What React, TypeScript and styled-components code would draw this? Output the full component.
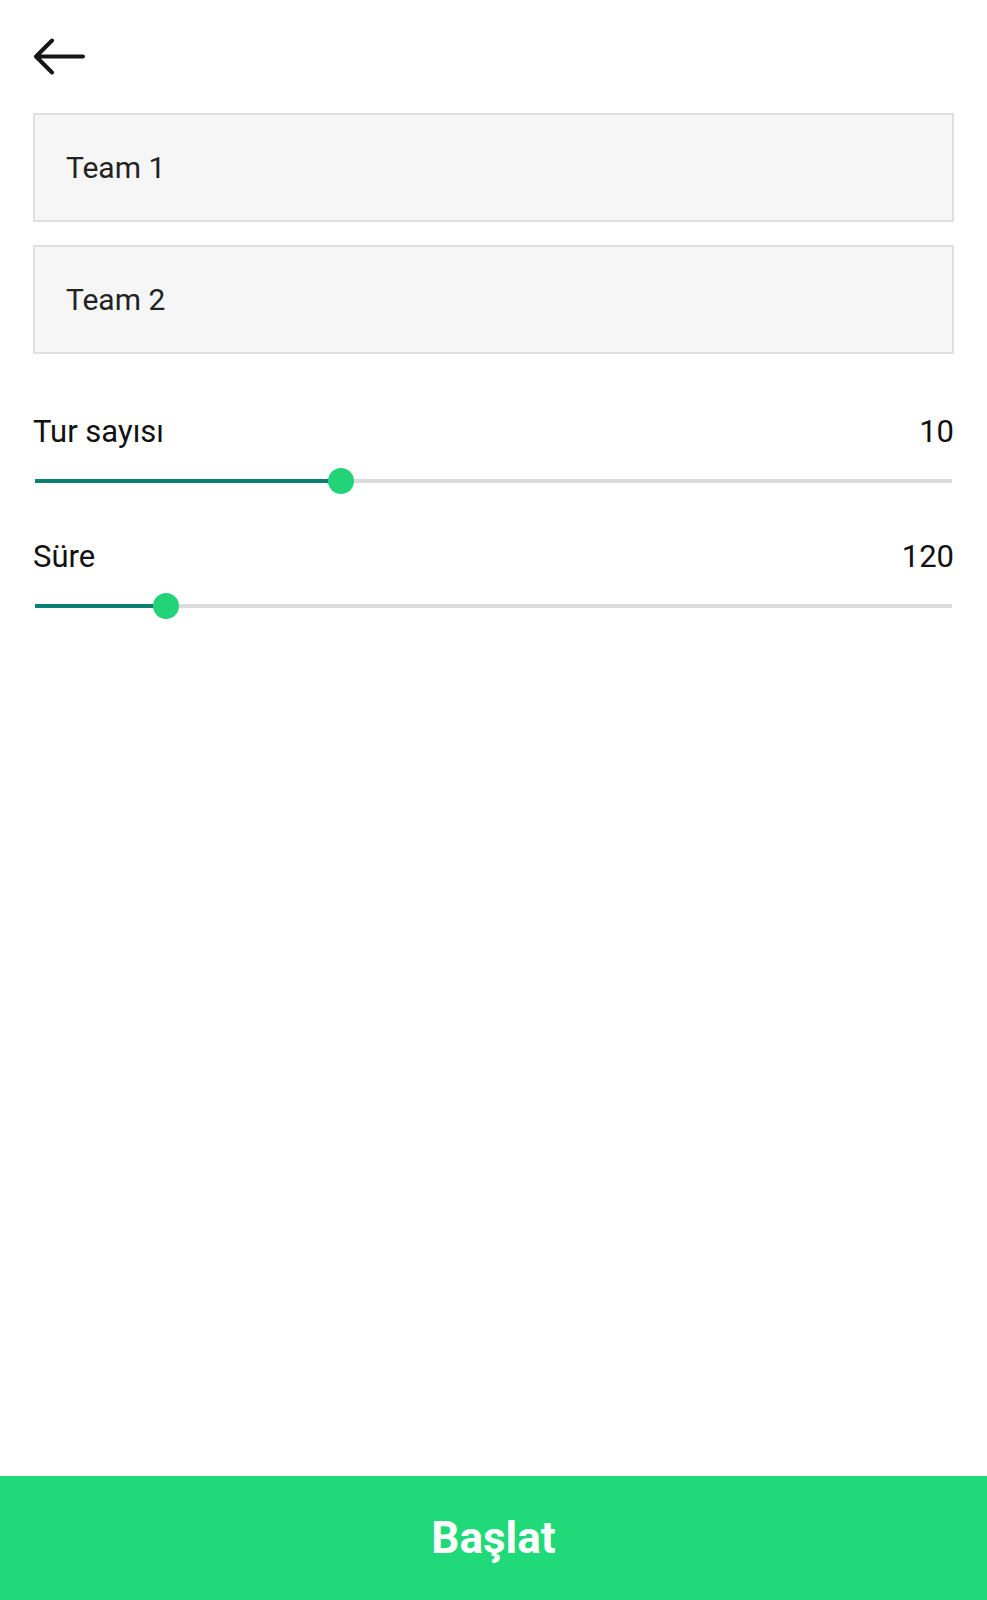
import styled, { createGlobalStyle } from 'styled-components';

const GlobalStyle = createGlobalStyle`
  html, body {
    margin: 0;
    padding: 0;
    background: #ffffff;
    font-family: Roboto, 'Noto Sans', sans-serif;
  }
  * {
    box-sizing: border-box;
  }
`;

type SliderRowProps = {
  label: string;
  value: number;
  min: number;
  max: number;
};

const SliderRow = ({ label, value, min, max }: SliderRowProps) => {
  const percent = ((value - min) / (max - min)) * 100;
  return (
    <SliderBlock>
      <LabelRow>
        <Label>{label}</Label>
        <Value>{value}</Value>
      </LabelRow>
      <SliderArea>
        <Track>
          <Fill style={{ width: `${percent}%` }} />
          <Thumb style={{ left: `${percent}%` }} />
        </Track>
      </SliderArea>
    </SliderBlock>
  );
};

const BackArrow = () => (
  <svg width="54" height="38" viewBox="0 0 54 38" fill="none">
    <path
      d="M51 18.5H4M20 2.5L4 18.5L20 34.5"
      stroke="#161616"
      strokeWidth="4"
      strokeLinecap="round"
      strokeLinejoin="round"
    />
  </svg>
);

export default function App() {
  return (
    <Screen>
      <GlobalStyle />
      <Content>
        <Header>
          <BackButton aria-label="Geri">
            <BackArrow />
          </BackButton>
        </Header>

        <Inputs>
          <TeamInput defaultValue="Team 1" />
          <TeamInput defaultValue="Team 2" />
        </Inputs>

        <Settings>
          <SliderRow label="Tur sayısı" value={10} min={5} max={20} />
          <SliderRow label="Süre" value={120} min={60} max={480} />
        </Settings>
      </Content>

      <StartButton>Başlat</StartButton>
    </Screen>
  );
}

const Screen = styled.div`
  display: flex;
  flex-direction: column;
  height: 100vh;
  background: #ffffff;
`;

const Content = styled.div`
  flex: 1;
  padding: 0 33px;
`;

const Header = styled.div`
  height: 113px;
  padding-top: 38px;
`;

const BackButton = styled.button`
  display: block;
  background: none;
  border: none;
  padding: 0;
  margin-left: -1px;
  cursor: pointer;
`;

const Inputs = styled.div`
  display: flex;
  flex-direction: column;
  gap: 23px;
`;

const TeamInput = styled.input`
  display: block;
  width: 100%;
  height: 109px;
  padding: 0 0 0 31px;
  background: #f6f6f6;
  border: 2px solid #e0e0e0;
  border-radius: 0;
  font-family: Roboto, 'Noto Sans', sans-serif;
  font-size: 30px;
  color: #222222;
  outline: none;
`;

const Settings = styled.div`
  display: flex;
  flex-direction: column;
  gap: 48px;
  margin-top: 63px;
`;

const SliderBlock = styled.div`
  display: flex;
  flex-direction: column;
  gap: 21px;
`;

const LabelRow = styled.div`
  display: flex;
  justify-content: space-between;
  align-items: baseline;
  font-size: 31px;
  line-height: 30px;
  color: #111111;
`;

const Label = styled.span``;

const Value = styled.span``;

const SliderArea = styled.div`
  height: 26px;
  display: flex;
  align-items: center;
  padding: 0 2px;
`;

const Track = styled.div`
  position: relative;
  width: 100%;
  height: 4px;
  background: #dcdcdc;
`;

const Fill = styled.div`
  height: 100%;
  background: #0b7f72;
`;

const Thumb = styled.div`
  position: absolute;
  top: 50%;
  width: 26px;
  height: 26px;
  border-radius: 50%;
  background: #22d477;
  transform: translate(-50%, -50%);
`;

const StartButton = styled.button`
  flex-shrink: 0;
  width: 100%;
  height: 124px;
  border: none;
  background: #20d978;
  color: #ffffff;
  font-family: Roboto, 'Noto Sans', sans-serif;
  font-weight: 700;
  font-size: 44px;
  cursor: pointer;
`;
